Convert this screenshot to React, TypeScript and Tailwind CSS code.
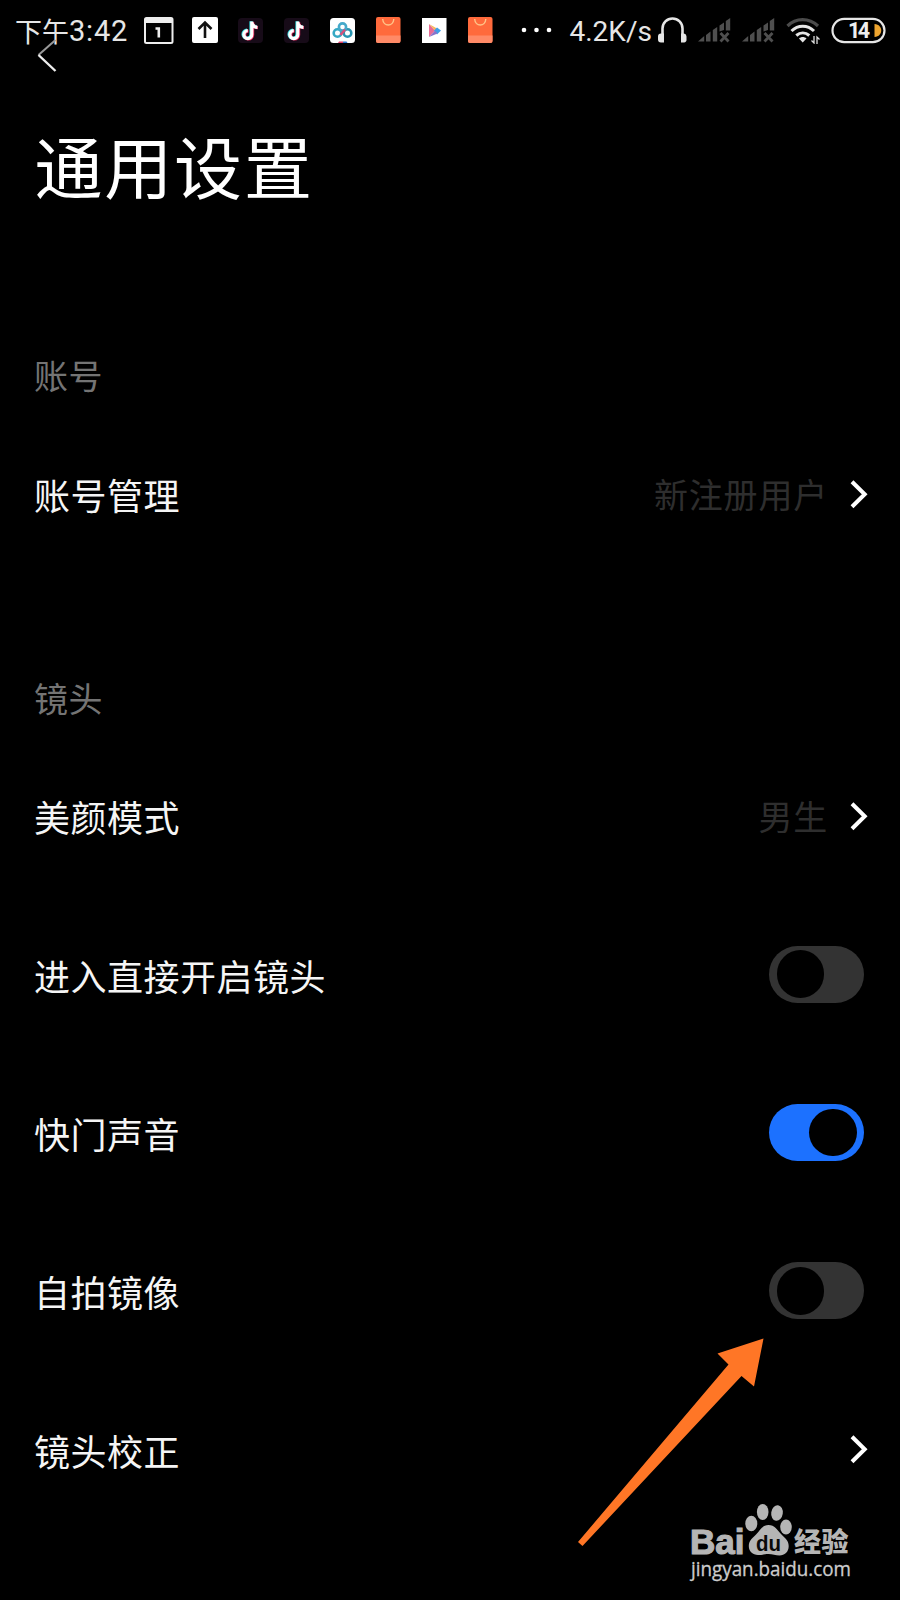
import type { ReactNode } from "react";

const Chevron = () => (
  <svg className="h-[30px] w-[18px]" viewBox="0 0 18 30" fill="none">
    <path d="M2 2.8 14.7 15.3 2 27.8" stroke="#fff" strokeWidth="4" />
  </svg>
);

const Toggle = ({ on = false }: { on?: boolean }) => (
  <span
    className={
      on
        ? "flex h-[57px] w-[95px] items-center justify-end rounded-full bg-[#1c71ff] px-[7.5px]"
        : "flex h-[57px] w-[95px] items-center rounded-full bg-[#333333] px-[7.5px]"
    }
  >
    <span className="size-[47.5px] rounded-full bg-black" />
  </span>
);

const Row = ({ label, children }: { label: string; children: ReactNode }) => (
  <div className="flex h-[158.3px] items-center justify-between pl-[34px]">
    <span className="pt-px text-[36px] leading-[54px] tracking-[0.5px] text-[#f5f5f5]">{label}</span>
    {children}
  </div>
);

const Link = ({ value }: { value?: string }) => (
  <span className="flex items-center gap-[22px] pr-[32px]">
    {value && <span className="pt-px text-[34px] leading-[52px] tracking-[0.8px] text-[#2e2e2e]">{value}</span>}
    <Chevron />
  </span>
);

const Section = ({ children }: { children: string }) => (
  <h2 className="pl-[34px] text-[34px] leading-[50px] tracking-[0.6px] text-[#747474]">{children}</h2>
);

const Douyin = () => (
  <svg className="size-[25px]" viewBox="0 0 25 25" fill="none">
    <rect width="25" height="25" rx="4" fill="#170b18" />
    <g strokeWidth="3.2">
      <path d="M13 3.2v13a4 4 0 1 1-4-4M13 4c.6 3 2.8 4.6 5.6 4.7" stroke="#32dce0" />
      <path d="M14.6 4v13a4 4 0 1 1-4-4M14.6 5c.6 3 2.6 4.6 5.4 4.7" stroke="#e9285d" />
      <path d="M13.8 3.6v13a4 4 0 1 1-4-4M13.8 4.6c.6 3 2.6 4.6 5.6 4.7" stroke="#fff" />
    </g>
  </svg>
);

const Bag = () => (
  <svg className="h-[26px] w-[25px]" viewBox="0 0 25 26" fill="none">
    <rect width="24.5" height="26" rx="2" fill="#ff6a3c" />
    <path d="M0 18.5h24.500V24a2 2 0 0 1-2 2H2a2 2 0 0 1-2-2z" fill="#ff8a67" />
    <path d="M6.700 2c.4 8 10.700 8 11.100 0" stroke="#ffc488" strokeWidth="1.4" />
  </svg>
);

const Signal = () => (
  <svg className="h-[25px] w-[33px]" viewBox="0 0 33 25" fill="#4f4f4f">
    <path d="M0 23.500 6.200 18v5.500zM8 17l4.500-3.500v10H8zM14.800 12l4.400-3v14.500h-4.400zM21.500 7.500l4.500-3V12l-4.500 1.500zM27.800 3l4.400-3v12.500h-4.400z" />
    <path d="m22.500 15 8 8.500m0-8.500-8 8.500" stroke="#4f4f4f" strokeWidth="2.800" />
  </svg>
);

const StatusBar = () => (
  <div className="flex h-[60px] items-center pl-[15px] text-[#e6e6e6]">
    <div className="flex w-[114px] items-center whitespace-nowrap pt-[2px]">
      <span className="w-[54px] text-[27px] leading-[40px]">下午</span>
      <span className="font-[Roboto] text-[29px] leading-[40px] tracking-[0.8px]">3:42</span>
    </div>
    <svg className="ml-[15px] h-[27px] w-[30px]" viewBox="0 0 30 27" fill="none">
      <rect x="1" y="1" width="27.500" height="25" rx="1.500" stroke="#eee" strokeWidth="2" />
      <path d="M1 1h27.500v5H1z" fill="#eee" />
      <path d="M11.500 11.500h3.300v9" stroke="#eee" strokeWidth="2.600" />
    </svg>
    <svg className="ml-[18px] size-[26px]" viewBox="0 0 26 26" fill="none">
      <rect width="26" height="26" rx="2" fill="#fff" />
      <path d="M13 21V6M6.500 12 13 5.500 19.500 12" stroke="#111" strokeWidth="2.600" />
    </svg>
    <div className="ml-[20px] flex items-center gap-[21px]">
      <Douyin />
      <Douyin />
      <svg className="size-[25px]" viewBox="0 0 25 25" fill="none">
        <rect width="25" height="25" rx="3.500" fill="#fff" />
        <g strokeWidth="2.600">
          <circle cx="7.500" cy="15" r="3.800" stroke="#36a9c4" />
          <circle cx="17.500" cy="15" r="3.800" stroke="#2994b1" />
          <circle cx="12.500" cy="9" r="3.600" stroke="#45a9ca" />
          <path d="m15 11.500-4.500 5.500" stroke="#d4517c" />
        </g>
        <path d="M9 23.500h4V25H8z" fill="#df3c68" />
        <path d="M13 23.500h3.500l1 1.500H13z" fill="#2674cb" />
      </svg>
      <Bag />
      <svg className="size-[25px]" viewBox="0 0 25 25">
        <path d="M0 0h24.500v25H0z" fill="#fff" />
        <path d="M7 6v13l6-6.500z" fill="#e96b94" />
        <path d="m7 6 6 6.500 2-2z" fill="#f7b55a" />
        <path d="m15 9.500 4 3-4 4-3-4z" fill="#3d9ee6" />
        <path d="m7 19 6-6.500 2.500 3z" fill="#8a71c9" />
      </svg>
      <Bag />
    </div>
    <svg className="ml-[27.5px] h-[6px] w-[32px]" viewBox="0 0 32 6" fill="#fff">
      <circle cx="3" cy="3" r="2.300" /><circle cx="15.500" cy="3" r="2.300" /><circle cx="28" cy="3" r="2.300" />
    </svg>
    <span className="ml-[17px] w-[84px] whitespace-nowrap pt-[3px] font-[Roboto] text-[28px] leading-[40px]">4.2K/s</span>
    <svg className="ml-[4px] h-[26px] w-[29px]" viewBox="0 0 29 26" fill="none">
      <path d="M4.500 24V11.500a9.500 9.500 0 0 1 20 0V24" stroke="#e6e6e6" strokeWidth="2.600" />
      <path d="M6 16.500v9H3a3 3 0 0 1-3-3v-3a3 3 0 0 1 3-3zM23 16.500v9h3a2.500 2.500 0 0 0 2.500-3v-3a3 3 0 0 0-2.500-3z" fill="#e6e6e6" />
    </svg>
    <div className="ml-[11.5px] flex gap-[11px]">
      <Signal />
      <Signal />
    </div>
    <svg className="ml-[11px] h-[27px] w-[34px]" viewBox="0 0 34 27" fill="none">
      <path d="M1.500 9C10 .5 23 .5 32 9" stroke="#4b4b4b" strokeWidth="3.200" />
      <path d="M5.500 14c6.500-6.500 16-6.500 22.500 0M10.300 18.500c4-3.500 9-3.500 13 0" stroke="#e6e6e6" strokeWidth="3" />
      <path d="M13 21.500c2-2 5.500-2 7.500 0L16.700 25.500z" fill="#e6e6e6" />
      <path d="M28 19v7l-2.500-2.500M31 27v-7l2.500 2.500" stroke="#ddd" strokeWidth="1.300" />
    </svg>
    <svg className="ml-[11px] h-[27px] w-[56px]" viewBox="0 0 56 27" fill="none">
      <path d="M43.500 7c9 .5 9 12.500 0 13z" fill="#eea52f" />
      <rect x="1.500" y="1.800" width="52" height="23.400" rx="11.700" stroke="#e6e6e6" strokeWidth="2.200" />
      <text x="17" y="20.800" fontSize="21.500" fontWeight="700" textLength="22" fill="#eee" className="font-[Roboto]">14</text>
    </svg>
  </div>
);

const Watermark = () => (
  <svg className="absolute left-[680px] top-[1496px] h-[100px] w-[190px]" viewBox="-6 -4 190 100" fill="#b5b5b5">
    <text x="4" y="53.500" fontSize="35.500" fontWeight="700" textLength="54.500" lengthAdjust="spacingAndGlyphs" stroke="#b5b5b5" strokeWidth="1.200" className="font-['Liberation_Sans']">Bai</text>
    <ellipse cx="65.300" cy="23.500" rx="6" ry="7.800" />
    <ellipse cx="76.700" cy="12" rx="5.800" ry="8" />
    <ellipse cx="91" cy="13" rx="5.800" ry="7.800" transform="rotate(8 91 13)" />
    <ellipse cx="100" cy="27" rx="5.800" ry="7.500" />
    <path d="M82.500 25c-6 0-8.500 5-12 9-3 3.500-7.700 6-7.700 12 0 5.500 4 9 9.200 9 4 0 6.500-1 10.500-1s7 1.500 11 1.500c5 0 9.200-3.500 9.200-9.500 0-6-4.700-8.500-7.700-12-3.500-4-6.500-9-12.500-9z" />
    <text x="70" y="50.500" fontSize="21.500" fontWeight="700" textLength="25" lengthAdjust="spacingAndGlyphs" fill="#0a0a0a" className="font-['Liberation_Sans']">du</text>
    <text x="108" y="51.500" fontSize="27" fontWeight="900" textLength="54.500" className="font-['Noto_Sans_CJK_SC']">经验</text>
    <text x="5" y="76" fontSize="20" textLength="160" lengthAdjust="spacingAndGlyphs" fill="#cccccc" stroke="#cccccc" strokeWidth="0.300" className="font-['Open_Sans']">jingyan.baidu.com</text>
  </svg>
);

export default function App() {
  return (
    <main className="relative h-[1600px] w-[900px] overflow-hidden bg-black font-['Noto_Sans_CJK_SC',sans-serif]">
      <StatusBar />
      <header className="-mt-[22px] h-[311.5px] pl-[34.5px]">
        <svg className="ml-[1.5px] h-[35px] w-[22px]" viewBox="0 0 22 35" fill="none">
          <path d="M19.500 2 2.500 17" stroke="#999" strokeWidth="2" />
          <path d="m2.500 17 17 16" stroke="#eee" strokeWidth="2.400" />
        </svg>
        <h1 className="mt-[42px] text-[68px] leading-[100px] tracking-[1.8px] text-white">通用设置</h1>
      </header>
      <section>
        <Section>账号</Section>
        <div className="mt-[15px]">
          <Row label="账号管理"><Link value="新注册用户" /></Row>
        </div>
      </section>
      <section className="mt-[100px]">
        <Section>镜头</Section>
        <div className="mt-[14px]">
          <Row label="美颜模式"><Link value="男生" /></Row>
          <Row label="进入直接开启镜头"><span className="pr-[36px]"><Toggle /></span></Row>
          <Row label="快门声音"><span className="pr-[36px]"><Toggle on /></span></Row>
          <Row label="自拍镜像"><span className="pr-[36px]"><Toggle /></span></Row>
          <Row label="镜头校正"><Link /></Row>
        </div>
      </section>
      <svg className="absolute left-[570px] top-[1330px] h-[220px] w-[200px]" viewBox="0 0 200 220">
        <path d="M193.500 8.500 184 56.500 171.500 46 12.500 216 8 212 158.500 34.500 147.500 23.500z" fill="#ff7626" />
      </svg>
      <Watermark />
    </main>
  );
}
